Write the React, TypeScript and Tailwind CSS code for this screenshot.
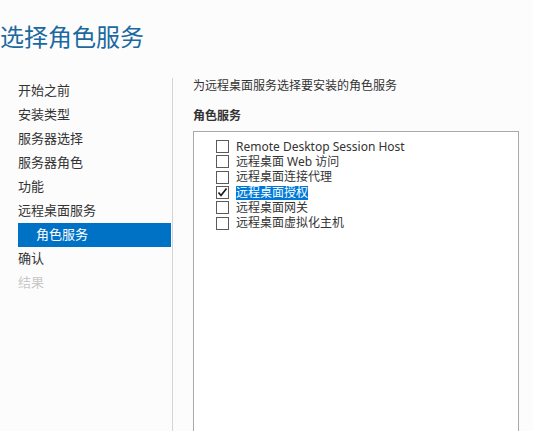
const font = { fontFamily: '"Noto Sans", "Noto Sans CJK SC", sans-serif' };

const steps = [
  { label: '开始之前' },
  { label: '安装类型' },
  { label: '服务器选择' },
  { label: '服务器角色' },
  { label: '功能' },
  { label: '远程桌面服务' },
  { label: '角色服务', sub: true, active: true },
  { label: '确认' },
  { label: '结果', disabled: true },
];

const services = [
  { label: 'Remote Desktop Session Host', checked: false },
  { label: '远程桌面 Web 访问', checked: false },
  { label: '远程桌面连接代理', checked: false },
  { label: '远程桌面授权', checked: true, selected: true },
  { label: '远程桌面网关', checked: false },
  { label: '远程桌面虚拟化主机', checked: false },
];

function CheckBox({ checked }: { checked: boolean }) {
  return (
    <span className="flex h-[13px] w-[13px] shrink-0 items-center justify-center border border-[#5a5a5a] bg-white">
      {checked && (
        <svg width="11" height="11" viewBox="0 0 11 11">
          <path d="M1.5 5.5 L4 8.5 L9.5 1.5" fill="none" stroke="#1a1a1a" strokeWidth="1.7" />
        </svg>
      )}
    </span>
  );
}

export default function App() {
  return (
    <div className="h-[431px] w-[533px] overflow-hidden bg-[#fcfcfc] text-[#333]" style={font}>
      <div className="h-[79px] pt-[21px]">
        <h1 className="text-[24px] leading-[32px] text-[#1a69a0]">选择角色服务</h1>
      </div>

      <div className="-mt-px flex h-[353px]">
        <nav className="w-[172px] pl-[18px] pr-px pt-px">
          {steps.map(s => (
            <div
              key={s.label}
              className={
                'flex h-[24px] items-center text-[13px] ' +
                (s.active ? 'bg-[#0072c6] text-white ' : '') +
                (s.disabled ? 'text-[#c8c8c8] ' : '') +
                (s.sub ? 'pl-[18px]' : '')
              }
            >
              {s.label}
            </div>
          ))}
        </nav>

        <main className="flex-1 border-l border-[#d4d4d4] pl-[20px]">
          <p className="text-[12px] leading-[16px]">为远程桌面服务选择要安装的角色服务</p>
          <h2 className="mt-[14px] text-[12px] font-bold leading-[16px]">角色服务</h2>
          <div className="mt-[7px] h-[330px] w-[326px] border border-[#a9a9a9] bg-white pl-[22px] pt-[7px]">
            {services.map(s => (
              <div key={s.label} className="flex h-[15.33px] items-center gap-[7px] text-[12px]">
                <CheckBox checked={s.checked} />
                <span
                  className={
                    'leading-[14px] ' + (s.selected ? 'bg-[#0078d7] text-white' : 'text-[#333]')
                  }
                >
                  {s.label}
                </span>
              </div>
            ))}
          </div>
        </main>
      </div>
    </div>
  );
}
